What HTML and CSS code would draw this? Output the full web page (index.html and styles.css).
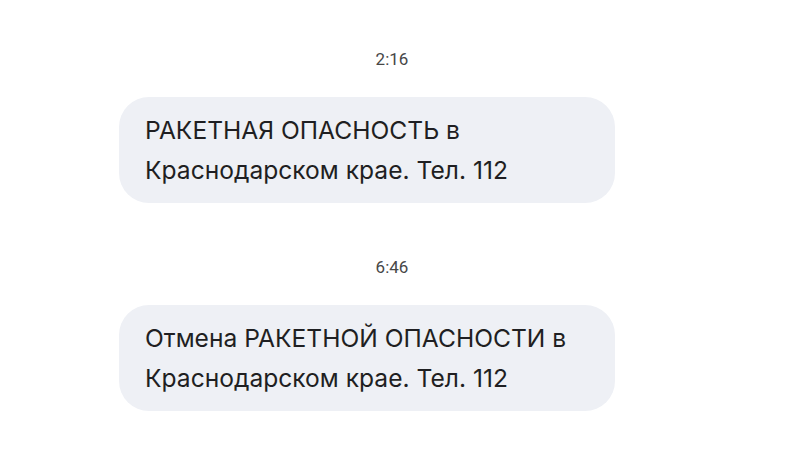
FILE: index.html
```html
<!DOCTYPE html>
<html lang="ru">
<head>
<meta charset="utf-8">
<link rel="stylesheet" href="styles.css">
</head>
<body>
<main class="thread">
  <section class="group">
    <div class="time">2:16</div>
    <div class="row">
      <div class="bubble">РАКЕТНАЯ ОПАСНОСТЬ в Краснодарском крае. Тел. 112</div>
    </div>
  </section>
  <section class="group">
    <div class="time">6:46</div>
    <div class="row">
      <div class="bubble">Отмена РАКЕТНОЙ ОПАСНОСТИ в Краснодарском крае. Тел. 112</div>
    </div>
  </section>
</main>
</body>
</html>
```

FILE: styles.css
```css
html, body {
  margin: 0;
  padding: 0;
  background: #ffffff;
}
body {
  font-family: Roboto, "Noto Sans", sans-serif;
  width: 800px;
  height: 464px;
  overflow: hidden;
}
.thread {
  display: flex;
  flex-direction: column;
  gap: 54px;
  padding: 49px 16px 0 0;
}
.group {
  display: flex;
  flex-direction: column;
  gap: 28px;
}
.time {
  text-align: center;
  font-size: 17px;
  line-height: 20px;
  color: #474747;
}
.row {
  display: flex;
  padding-left: 119px;
}
.bubble {
  width: 496px;
  box-sizing: border-box;
  padding: 13px 26px;
  background: #eef0f5;
  border-radius: 30px;
  font-family: Inter, Roboto, sans-serif;
  font-size: 24.6px;
  line-height: 40px;
  color: #1f1f22;
}
```
